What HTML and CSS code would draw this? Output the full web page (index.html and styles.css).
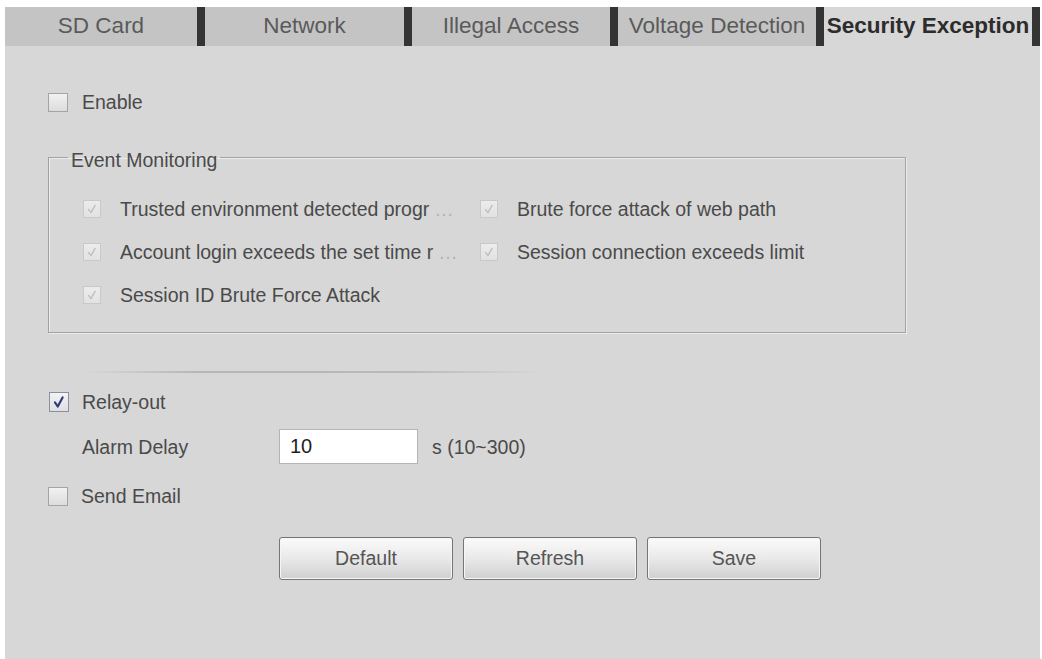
FILE: index.html
```html
<!DOCTYPE html>
<html lang="en">
<head>
<meta charset="utf-8">
<title>Security Exception</title>
<link rel="stylesheet" href="styles.css">
</head>
<body>
<div class="page">
  <div class="tabs">
    <div class="tab t0">SD Card</div>
    <div class="tab t1">Network</div>
    <div class="tab t2">Illegal Access</div>
    <div class="tab t3">Voltage Detection</div>
    <div class="tab t4 active">Security Exception</div>
  </div>
  <div class="content">
    <div class="row enable">
      <span class="cb"></span>
      <span class="lbl">Enable</span>
    </div>

    <fieldset class="monitor">
      <legend>Event Monitoring</legend>
      <div class="grid">
        <div class="item">
          <span class="cb small dis"><svg viewBox="0 0 18 18"><path d="M5 9.5 L7.8 13 L12.5 5"/></svg></span>
          <span class="txt">Trusted environment detected progr<span class="ell">…</span></span>
        </div>
        <div class="item">
          <span class="cb small dis"><svg viewBox="0 0 18 18"><path d="M5 9.5 L7.8 13 L12.5 5"/></svg></span>
          <span class="txt">Brute force attack of web path</span>
        </div>
        <div class="item">
          <span class="cb small dis"><svg viewBox="0 0 18 18"><path d="M5 9.5 L7.8 13 L12.5 5"/></svg></span>
          <span class="txt">Account login exceeds the set time r<span class="ell">…</span></span>
        </div>
        <div class="item">
          <span class="cb small dis"><svg viewBox="0 0 18 18"><path d="M5 9.5 L7.8 13 L12.5 5"/></svg></span>
          <span class="txt">Session connection exceeds limit</span>
        </div>
        <div class="item">
          <span class="cb small dis"><svg viewBox="0 0 18 18"><path d="M5 9.5 L7.8 13 L12.5 5"/></svg></span>
          <span class="txt">Session ID Brute Force Attack</span>
        </div>
      </div>
    </fieldset>

    <div class="divider"></div>

    <div class="row relay">
      <span class="cb on"><svg viewBox="0 0 20 20"><path d="M5.5 10.5 L8.6 15 L14 5"/></svg></span>
      <span class="lbl">Relay-out</span>
    </div>

    <div class="row alarm">
      <span class="lbl alabel">Alarm Delay</span>
      <div class="input">10</div>
      <span class="lbl unit">s (10~300)</span>
    </div>

    <div class="row email">
      <span class="cb"></span>
      <span class="lbl">Send Email</span>
    </div>

    <div class="buttons">
      <button class="btn">Default</button>
      <button class="btn">Refresh</button>
      <button class="btn">Save</button>
    </div>
  </div>
</div>
</body>
</html>
```

FILE: styles.css
```css
html, body {
  margin: 0;
  padding: 0;
  background: #ffffff;
}

body {
  font-family: "Liberation Sans", Arial, sans-serif;
  font-size: 19.5px;
  color: #4a4a4a;
}

.page {
  margin: 7px 0 0 5px;
  width: 1035px;
  height: 652px;
  background: #d7d7d7;
  box-sizing: border-box;
}

/* tabs */
.tabs {
  display: flex;
  height: 39px;
}

.tab {
  box-sizing: border-box;
  height: 39px;
  line-height: 38px;
  background: #c4c4c4;
  border-right: 8px solid #343434;
  text-align: center;
  font-size: 22.5px;
  color: #5a5a5a;
  white-space: nowrap;
  overflow: hidden;
}

.t0 { width: 200px; }
.t1 { width: 207px; }
.t2 { width: 206px; }
.t3 { width: 206px; }
.t4 { width: 216px; }

.tab.active {
  background: #d7d7d7;
  color: #2c2c2c;
  font-weight: bold;
}

/* content */
.content {
  padding-left: 43px;
  display: flex;
  flex-direction: column;
  align-items: flex-start;
}

.row {
  display: flex;
  align-items: center;
}

.lbl {
  line-height: 22px;
  white-space: nowrap;
}

.cb {
  box-sizing: border-box;
  width: 20px;
  height: 19px;
  border: 1px solid #a4a4a4;
  background: linear-gradient(#f2f2f2, #dcdcdc);
  display: flex;
  align-items: center;
  justify-content: center;
  flex: none;
}

.cb svg {
  width: 100%;
  height: 100%;
  display: block;
}

.cb svg path {
  fill: none;
  stroke-linecap: round;
  stroke-linejoin: round;
}

.enable {
  margin-top: 46px;
  height: 20px;
  gap: 14px;
}

/* event monitoring */
.monitor {
  margin: 31px 0 0 0;
  padding: 0 0 16px 0;
  width: 858px;
  box-sizing: border-box;
  border: 1px solid #a2a2a2;
  box-shadow: inset 1px 1px 0 #ececec, 1px 1px 0 #ececec;
  min-width: 0;
}

.monitor legend {
  margin-left: 19px;
  padding: 6px 3px 0 3px;
  line-height: 22px;
  color: #4a4a4a;
}

.grid {
  padding: 16px 0 0 34px;
  display: grid;
  grid-template-columns: 397px 1fr;
  grid-auto-rows: 43px;
}

.item {
  display: flex;
  align-items: center;
  gap: 19px;
  white-space: nowrap;
  line-height: 22px;
}

.cb.small {
  width: 18px;
  height: 18px;
}

.cb.dis {
  border: 1px solid #c9c9c9;
  background: linear-gradient(#ececec, #e2e2e2);
}

.cb.dis svg path {
  stroke: #bdbdbd;
  stroke-width: 1.5;
}

.ell {
  color: #b4b4b4;
  margin-left: 5px;
}

.divider {
  margin: 38px 0 0 37px;
  width: 460px;
  height: 2px;
  background: linear-gradient(to right, rgba(180,180,180,0), #b6b6b6 25%, #b9b9b9 70%, rgba(180,180,180,0));
}

.relay {
  margin-top: 19px;
  height: 20px;
  gap: 13px;
  padding-left: 1px;
}

.cb.on {
  width: 20px;
  height: 20px;
  border: 1px solid #8c8f9e;
  background: linear-gradient(#f4f4f6, #dedee4);
}

.cb.on svg path {
  stroke: #2b3a78;
  stroke-width: 2.4;
}

.alarm {
  margin-top: 17px;
  height: 35px;
}

.alabel {
  width: 197px;
  padding-left: 34px;
}

.input {
  box-sizing: border-box;
  width: 139px;
  height: 35px;
  background: #ffffff;
  border: 1px solid #b4b4b4;
  padding-left: 10px;
  line-height: 33px;
  color: #1e1e1e;
  font-size: 20px;
}

.unit {
  margin-left: 14px;
}

.email {
  margin-top: 22px;
  height: 20px;
  gap: 13px;
}

/* buttons */
.buttons {
  margin: 31px 0 0 231px;
  display: flex;
  gap: 10px;
}

.btn {
  width: 174px;
  height: 43px;
  box-sizing: border-box;
  border: 1px solid #757575;
  border-radius: 3px;
  background: linear-gradient(#fbfbfb, #e9e9e9 50%, #d0d0d0);
  box-shadow: inset 0 0 0 1px #f6f6f6;
  font-family: "Liberation Sans", Arial, sans-serif;
  font-size: 19.5px;
  color: #555555;
  padding: 0;
}
```
